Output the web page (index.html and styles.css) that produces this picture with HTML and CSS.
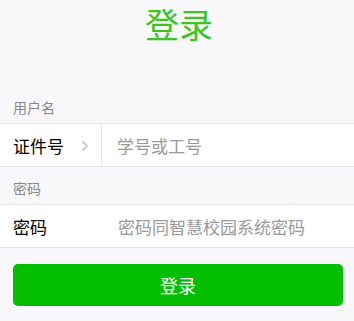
FILE: index.html
```html
<!DOCTYPE html>
<html lang="zh-CN">
<head>
    <meta charset="UTF-8">
    <meta name="viewport" content="width=device-width, initial-scale=1.0">
    <title>登录</title>
    <link rel="stylesheet" href="styles.css">
</head>
<body>
    <h1 class="title">登录</h1>

    <div class="cells-title first">用户名</div>
    <div class="cells">
        <div class="cell">
            <div class="cell-select">
                <span>证件号</span>
                <svg class="arrow" width="8" height="12" viewBox="0 0 8 12">
                    <path d="M1.5 1.5 L6 6 L1.5 10.5" fill="none" stroke="#c8c8cd" stroke-width="1.8"/>
                </svg>
            </div>
            <input class="cell-input" type="text" placeholder="学号或工号">
        </div>
    </div>

    <div class="cells-title">密码</div>
    <div class="cells">
        <div class="cell">
            <div class="cell-label">密码</div>
            <input class="cell-input" type="password" placeholder="密码同智慧校园系统密码">
        </div>
    </div>

    <div class="btn-area">
        <button class="btn-primary">登录</button>
    </div>
</body>
</html>
```

FILE: styles.css
```css
body {
    margin: 0;
    background: #f8f8fa;
    font-family: 'Noto Sans CJK SC', 'Noto Sans', sans-serif;
}

.title {
    margin: 0;
    text-align: center;
    font-size: 34px;
    font-weight: normal;
    line-height: 47px;
    color: #3cc51f;
    padding-left: 4px;
}

.cells-title {
    padding: 11px 13px 5px;
    font-size: 14px;
    line-height: 21px;
    color: #888;
}

.cells-title.first {
    padding-top: 50px;
}

.cells {
    background: #ffffff;
    border-top: 1px solid #e5e5e5;
    border-bottom: 1px solid #e5e5e5;
}

.cell {
    display: flex;
    align-items: stretch;
    height: 42px;
}

.cell-select {
    display: flex;
    align-items: center;
    justify-content: space-between;
    width: 102px;
    box-sizing: border-box;
    padding: 0 12px 0 13px;
    border-right: 1px solid #e5e5e5;
    font-size: 17px;
    color: #000;
}

.arrow {
    margin-top: 2px;
}

.cell-label {
    display: flex;
    align-items: center;
    width: 103px;
    box-sizing: border-box;
    padding-left: 13px;
    font-size: 17px;
    color: #000;
}

.cell-input {
    flex: 1;
    min-width: 0;
    border: none;
    outline: none;
    background: transparent;
    padding: 0 0 0 15px;
    font-family: inherit;
    font-size: 17px;
    color: #000;
}

.cell-label + .cell-input {
    padding-left: 15px;
}

.cell-input::placeholder {
    color: #999;
}

.btn-area {
    padding: 16px 11px 0 13px;
}

.btn-primary {
    display: block;
    width: 100%;
    height: 42px;
    border: none;
    border-radius: 5px;
    background: #04be02;
    color: #ffffff;
    font-family: inherit;
    font-size: 18px;
    cursor: pointer;
}
```
